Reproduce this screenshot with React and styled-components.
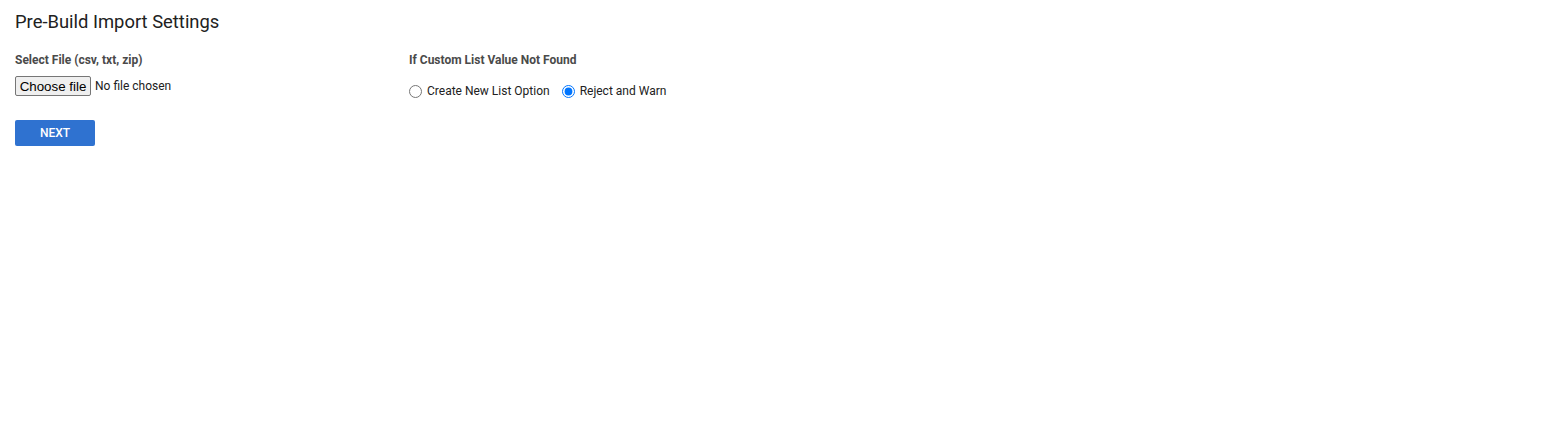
import styled, { createGlobalStyle } from 'styled-components';

const GlobalStyle = createGlobalStyle`
  body {
    margin: 0;
    background: #fff;
    font-family: Roboto, "Liberation Sans", sans-serif;
    color: #212121;
  }
`;

const Page = styled.div`
  padding: 11px 15px 10px;
`;

const Title = styled.h2`
  font-size: 18.4px;
  font-weight: 400;
  margin: 0 0 19px;
  line-height: 22px;
  color: #212121;
`;

const Columns = styled.div`
  display: flex;
`;

const Field = styled.div`
  display: flex;
  flex-direction: column;
  width: ${(p) => p.$width || 'auto'};
`;

const Label = styled.div`
  font-size: 12px;
  font-weight: 700;
  color: #4a4a4a;
  line-height: 16px;
  margin-bottom: 8px;
`;

const FilePicker = styled.label`
  display: flex;
  align-items: center;
  gap: 4px;
  font-size: 12px;
  color: #212121;
  cursor: pointer;
  input {
    display: none;
  }
`;

const FileButton = styled.span`
  display: inline-flex;
  align-items: center;
  justify-content: center;
  box-sizing: border-box;
  width: 76px;
  height: 20px;
  border: 1px solid #767676;
  border-radius: 2px;
  background: #efefef;
  font-family: "Liberation Sans", Arial, sans-serif;
  font-size: 13.33px;
  color: #000;
`;

const RadioRow = styled.div`
  display: flex;
  align-items: center;
  gap: 12px;
  margin-top: 8px;
`;

const RadioLabel = styled.label`
  display: flex;
  align-items: center;
  gap: 5px;
  font-size: 12px;
  color: #212121;
  input {
    margin: 0;
    width: 13px;
    height: 13px;
  }
`;

const NextBtn = styled.button`
  margin-top: 22px;
  width: 80px;
  height: 26px;
  border: none;
  border-radius: 2px;
  background-color: #2f72d0;
  color: #fff;
  font-family: Roboto, "Liberation Sans", sans-serif;
  font-size: 12px;
  font-weight: 500;
  text-transform: uppercase;
  cursor: pointer;
`;

const App = () => {
  return (
    <Page>
      <GlobalStyle />
      <Title>Pre-Build Import Settings</Title>
      <Columns>
        <Field $width="394px">
          <Label>Select File (csv, txt, zip)</Label>
          <FilePicker>
            <input type="file" accept=".csv,.txt,.zip" />
            <FileButton>Choose file</FileButton>
            No file chosen
          </FilePicker>
        </Field>
        <Field>
          <Label>If Custom List Value Not Found</Label>
          <RadioRow>
            <RadioLabel>
              <input type="radio" name="notFound" value="create" />
              Create New List Option
            </RadioLabel>
            <RadioLabel>
              <input type="radio" name="notFound" value="reject" defaultChecked />
              Reject and Warn
            </RadioLabel>
          </RadioRow>
        </Field>
      </Columns>
      <NextBtn>Next</NextBtn>
    </Page>
  );
};

export default App;
